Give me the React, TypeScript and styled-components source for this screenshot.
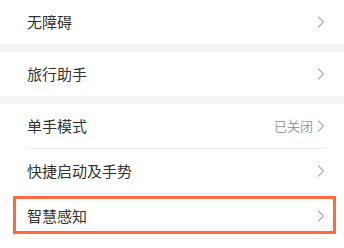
import React from "react";
import styled, { createGlobalStyle } from "styled-components";

const GlobalStyle = createGlobalStyle`
  html, body {
    margin: 0;
    padding: 0;
    background: #ffffff;
    overflow: hidden;
  }
  body {
    font-family: "Noto Sans CJK SC", "Noto Sans", sans-serif;
    -webkit-font-smoothing: antialiased;
  }
`;

const Page = styled.div`
  width: 344px;
  display: flex;
  flex-direction: column;
`;

const Gap = styled.div`
  height: 8px;
  background: #f4f4f4;
`;

const Group = styled.section`
  display: flex;
  flex-direction: column;
  background: #fff;
`;

const Divider = styled.div`
  height: 1px;
  margin: 0 17px 0 27px;
  background: #eeeeee;
`;

const Row = styled.div<{ $highlight?: boolean }>`
  position: relative;
  height: 44px;
  display: flex;
  align-items: center;
  padding: 0 19px 0 27px;

  ${(p) =>
    p.$highlight &&
    `
    &::after {
      content: "";
      position: absolute;
      left: 13px;
      right: 8px;
      top: 2px;
      bottom: 4px;
      border: 3px solid #fe6b3e;
      pointer-events: none;
    }
  `}
`;

const Label = styled.span`
  flex: 1;
  font-size: 15px;
  line-height: 20px;
  color: #333333;
`;

const Value = styled.span`
  font-size: 13px;
  line-height: 18px;
  color: #9a9a9a;
  margin-right: 4px;
`;

const Chevron = () => (
  <svg width="8" height="12" viewBox="0 0 8 12" fill="none">
    <path d="M1.5 1 L6.5 6 L1.5 11" stroke="#b0b0b0" strokeWidth="1.2" strokeLinecap="round" strokeLinejoin="round" />
  </svg>
);

interface ItemProps {
  label: string;
  value?: string;
  highlight?: boolean;
}

const Item = ({ label, value, highlight }: ItemProps) => (
  <Row $highlight={highlight}>
    <Label>{label}</Label>
    {value && <Value>{value}</Value>}
    <Chevron />
  </Row>
);

const App = () => {
  return (
    <Page>
      <GlobalStyle />
      <Group>
        <Item label="无障碍" />
      </Group>
      <Gap />
      <Group>
        <Item label="旅行助手" />
      </Group>
      <Gap />
      <Group>
        <Item label="单手模式" value="已关闭" />
        <Divider />
        <Item label="快捷启动及手势" />
        <Divider />
        <Item label="智慧感知" highlight />
        <Divider />
        <Row />
      </Group>
    </Page>
  );
};

export default App;
